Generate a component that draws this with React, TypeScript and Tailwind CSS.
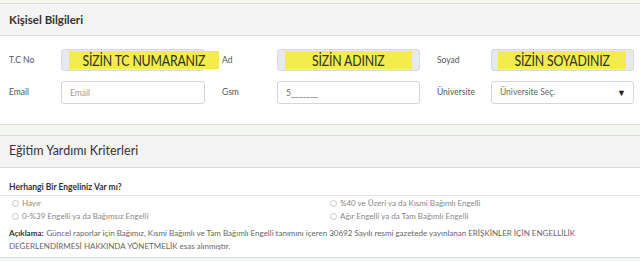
type FieldProps = {
  label: string;
  labelW: string;
  children: React.ReactNode;
};

function Field({ label, labelW, children }: FieldProps) {
  return (
    <div className="flex items-center">
      <span className={`${labelW} text-[8.5px] text-[#555]`}>{label}</span>
      {children}
    </div>
  );
}

function Locked({ text, w, pad }: { text: string; w: string; pad: string }) {
  return (
    <div className={`${w} h-[22px] rounded-[3px] border border-[#d6d9dd] bg-[#e6e9ed] flex items-center ${pad}`}>
      <div className="h-[18px] flex-1 bg-[#f3ec4c] flex items-center justify-center whitespace-nowrap text-[15px] leading-none text-[#2f2f2f]">
        <span className="inline-block scale-x-[0.82] tracking-[-0.2px]">{text}</span>
      </div>
    </div>
  );
}

function Radio({ label }: { label: string }) {
  return (
    <label className="flex items-center gap-[3px] text-[8px] leading-[13px] text-[#888]">
      <span className="w-[7px] h-[7px] rounded-full border border-[#c8c8c8] bg-white" />
      {label}
    </label>
  );
}

export default function App() {
  return (
    <div className="w-[640px] h-[262px] bg-[#f2f7f0] pt-[3px] overflow-hidden" style={{ fontFamily: 'Lato, "Noto Sans", sans-serif' }}>
      <section className="bg-white border-y border-[#dcdcdc]">
        <div className="h-[32px] bg-[#f4f4f4] border-b border-[#dcdcdc] flex items-center px-[9px]">
          <h2 className="text-[11.5px] font-bold text-[#333]">Kişisel Bilgileri</h2>
        </div>
        <div className="pt-[13px] pb-[20px] pl-[9px] flex flex-col gap-[10px]">
          <div className="flex gap-[17px]">
            <Field label="T.C No" labelW="w-[52px]">
              <Locked text="SİZİN TC NUMARANIZ" w="w-[144px]" pad="pl-[7px] pr-[10px]" />
            </Field>
            <Field label="Ad" labelW="w-[55px]">
              <Locked text="SİZİN ADINIZ" w="w-[143px]" pad="pl-[7px] pr-[7px]" />
            </Field>
            <Field label="Soyad" labelW="w-[54px]">
              <Locked text="SİZİN SOYADINIZ" w="w-[143px]" pad="pl-[6px] pr-[7px]" />
            </Field>
          </div>
          <div className="flex gap-[17px]">
            <Field label="Email" labelW="w-[52px]">
              <input
                placeholder="Email"
                className="w-[144px] h-[23px] rounded-[3px] border border-[#d6d6d6] px-[8px] text-[8.5px] placeholder:text-[#9a9a9a] outline-none"
              />
            </Field>
            <Field label="Gsm" labelW="w-[55px]">
              <input
                defaultValue="5_______"
                className="w-[143px] h-[23px] rounded-[3px] border border-[#d6d6d6] px-[8px] text-[8.5px] text-[#666] outline-none"
              />
            </Field>
            <Field label="Üniversite" labelW="w-[54px]">
              <div className="w-[143px] h-[23px] rounded-[3px] border border-[#d6d6d6] pl-[8px] pr-[7px] flex items-center justify-between text-[8.5px] text-[#666]">
                <span>Üniversite Seç.</span>
                <span className="text-[9px] text-[#222]">▼</span>
              </div>
            </Field>
          </div>
        </div>
      </section>

      <section className="mt-[10px] bg-white border-y border-[#dcdcdc]">
        <div className="h-[32px] bg-[#f4f4f4] border-b border-[#dcdcdc] flex items-center px-[9px]">
          <h2 className="text-[12.5px] text-[#333]">Eğitim Yardımı Kriterleri</h2>
        </div>
        <div className="px-[9px] pt-[14px] h-[28px] border-b border-[#e2e2e2]">
          <p className="text-[8.5px] font-bold leading-[11px] text-[#333]">Herhangi Bir Engeliniz Var mı?</p>
        </div>
        <div className="pl-[12px] pt-[1px] grid grid-cols-[318px_1fr]">
          <Radio label="Hayır" />
          <Radio label="%40 ve Üzeri ya da Kısmi Bağımlı Engelli" />
          <Radio label="0-%39 Engelli ya da Bağımsız Engelli" />
          <Radio label="Ağır Engelli ya da Tam Bağımlı Engelli" />
        </div>
        <p className="px-[9px] pt-[4px] pb-[4px] text-[8px] leading-[13px] text-[#666]">
          <b className="font-bold text-[#333] mr-[3px]">Açıklama:</b>Güncel raporlar için Bağımız, Kısmi Bağımlı ve Tam Bağımlı Engelli tanımını içeren 30692 Sayılı resmi gazetede yayınlanan ERİŞKİNLER İÇİN ENGELLİLİK DEĞERLENDİRMESİ HAKKINDA YÖNETMELİK esas alınmıştır.
        </p>
      </section>
    </div>
  );
}
